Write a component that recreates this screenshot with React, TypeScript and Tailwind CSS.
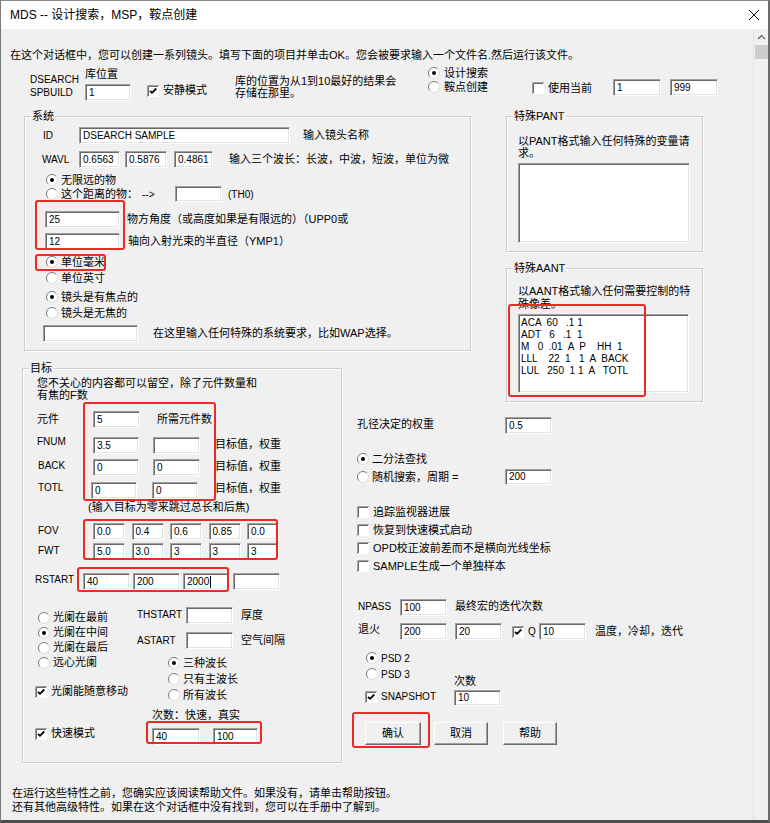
import React from 'react';

const sunken =
  'bg-white border border-t-[#a0a0a0] border-l-[#a0a0a0] border-r-white border-b-white shadow-[inset_1px_1px_0_#696969,inset_-1px_-1px_0_#e3e3e3]';

const Edit: React.FC<{ cls?: string; v?: string; caret?: boolean; short?: boolean }> = ({ cls = '', v = '', caret = false, short = false }) => (
  <div className={`shrink-0 flex items-center pl-[3px] text-[10px] leading-none ${short ? 'h-[16px]' : 'h-[17px]'} ${sunken} ${cls}`}>
    {v}
    {caret && <span className="ml-px w-px h-[12px] bg-black" />}
  </div>
);

const Radio: React.FC<{ on?: boolean }> = ({ on }) => (
  <svg width="12" height="12" viewBox="0 0 12 12" className="shrink-0">
    <circle cx="6" cy="6" r="5.5" fill="#fff" />
    <path d="M2.1 9.9A5.5 5.5 0 0 1 9.9 2.1" fill="none" stroke="#7a7a7a" />
    <path d="M9.9 2.1A5.5 5.5 0 0 1 2.1 9.9" fill="none" stroke="#dcdcdc" />
    {on && <circle cx="6" cy="6" r="2" fill="#000" />}
  </svg>
);

const Check: React.FC<{ on?: boolean }> = ({ on }) => (
  <svg width="12" height="12" viewBox="0 0 12 12" className="shrink-0">
    <rect x="0" y="0" width="12" height="12" fill="#fff" />
    <path d="M0.5 12V0.5H12" fill="none" stroke="#a0a0a0" />
    <path d="M1.5 11V1.5H11" fill="none" stroke="#696969" />
    {on && <path d="M3 5.8 5 7.8 9.3 3.5" fill="none" stroke="#000" strokeWidth="1.8" />}
  </svg>
);

const Opt: React.FC<{ on?: boolean; t: string; cls?: string; gap?: string }> = ({ on, t, cls = '', gap = 'ml-[3px]' }) => (
  <div className={`flex items-center whitespace-nowrap ${cls}`}>
    <Radio on={on} />
    <span className={gap}>{t}</span>
  </div>
);

const Box: React.FC<{ on?: boolean; t: string; cls?: string; lat?: boolean }> = ({ on, t, cls = '', lat }) => (
  <div className={`flex items-center whitespace-nowrap ${cls}`}>
    <Check on={on} />
    <span className={`ml-[4px] ${lat ? 'text-[10px]' : ''}`}>{t}</span>
  </div>
);

const Group: React.FC<{ title: string; cls?: string; children: React.ReactNode }> = ({ title, cls = '', children }) => (
  <fieldset className={`border border-[#cdcdcd] shadow-[inset_1px_1px_0_#fff,1px_1px_0_#fff] ${cls}`}>
    <legend className="ml-[6px] px-[1px] leading-[12px] bg-[#f0f0f0]">{title}</legend>
    {children}
  </fieldset>
);

const Btn: React.FC<{ t: string; cls?: string }> = ({ t, cls = '' }) => (
  <button className={`h-[23px] flex items-center justify-center bg-[#f0f0f0] border border-t-white border-l-white border-r-[#696969] border-b-[#696969] shadow-[inset_-1px_-1px_0_#a0a0a0] text-[11px] ${cls}`}>
    {t}
  </button>
);

const Mark: React.FC<{ cls: string }> = ({ cls }) => (
  <div className={`absolute pointer-events-none border-2 border-[#ec2b24] rounded-[3px] ${cls}`} />
);

const aant = [
  'ACA  60   .1 1',
  'ADT   6   .1  1',
  'M   0  .01  A  P    HH  1',
  'LLL    22  1   1  A  BACK',
  'LUL   250  1 1  A   TOTL',
];

export default function App() {
  return (
    <div className="relative w-[770px] h-[823px] bg-[#f0f0f0] border-t border-l border-r-2 border-b-[3px] border-t-[#8a8a8a] border-l-[#7a7a7a] border-r-[#6b6b6b] border-b-[#4d4d4d] overflow-hidden text-black text-[11px] leading-[13px] font-['Liberation_Sans','Noto_Sans_CJK_SC',sans-serif]">
      {/* title bar */}
      <div className="h-[28px] bg-white flex items-center justify-between pl-[9px] pr-[8px]">
        <span className="text-[12px]">MDS -- 设计搜索，MSP，鞍点创建</span>
        <svg width="12" height="12" viewBox="0 0 12 12">
          <path d="M1 1 11 11M11 1 1 11" stroke="#000" strokeWidth="1" />
        </svg>
      </div>

      <div className="flex h-[791px]">
        <div className="w-[752px] whitespace-nowrap">
          <div className="mt-[20px] ml-[9px] h-[13px]">
            在这个对话框中，您可以创建一系列镜头。填写下面的项目并单击OK。您会被要求输入一个文件名.然后运行该文件。
          </div>

          {/* top row */}
          <div className="flex items-start h-[35px] mt-[4px]">
            <div className="ml-[29px] w-[55px] pt-[7px] text-[10px] leading-[13px]">
              DSEARCH
              <br />
              SPBUILD
            </div>
            <div className="w-[62px] pt-[2px]">
              <div className="leading-[13px]">库位置</div>
              <Edit cls="w-[46px] mt-[3px]" v="1" />
            </div>
            <Box on t="安静模式" cls="w-[88px] mt-[18px] h-[13px]" />
            <div className="w-[193px] mt-[9px] leading-[12px]">
              库的位置为从1到10最好的结果会
              <br />
              存储在那里。
            </div>
            <div className="w-[104px]">
              <Opt on t="设计搜索" cls="h-[14px]" gap="ml-[4px]" />
              <Opt t="鞍点创建" cls="h-[14px]" gap="ml-[4px]" />
            </div>
            <Box t="使用当前" cls="w-[81px] mt-[15px] h-[14px]" />
            <Edit cls="w-[48px] mt-[13px]" v="1" />
            <Edit cls="w-[48px] ml-[9px] mt-[13px]" v="999" />
          </div>

          <div className="grid grid-cols-[320px_164px_220px] grid-rows-[252px_48px_auto] ml-[21px] mt-[9px]">
            {/* system */}
            <Group title="系统" cls="col-start-1 col-span-2 row-start-1 self-start ml-[2px] w-[447px] pb-[8px]">
              <div className="flex items-center h-[17px] mt-[5px]">
                <span className="ml-[18px] w-[36px] text-[10px]">ID</span>
                <Edit cls="w-[211px]" v="DSEARCH SAMPLE" />
                <span className="ml-[13px]">输入镜头名称</span>
              </div>
              <div className="flex items-center h-[17px] mt-[7px]">
                <span className="ml-[17px] w-[37px] text-[10px]">WAVL</span>
                <Edit cls="w-[41px]" v="0.6563" />
                <Edit cls="w-[42px] ml-[5px]" v="0.5876" />
                <Edit cls="w-[39px] ml-[7px]" v="0.4861" />
                <span className="ml-[16px]">输入三个波长：长波，中波，短波，单位为微</span>
              </div>
              <Opt on t="无限远的物" cls="ml-[21px] mt-[6px] h-[12px]" />
              <div className="flex items-center h-[16px]">
                <div className="ml-[21px] w-[129px] flex items-center">
                  <Radio />
                  <span className="ml-[3px]">这个距离的物：</span>
                  <span className="ml-[4px] text-[10px]">--&gt;</span>
                </div>
                <Edit cls="w-[47px]" short />
                <span className="ml-[6px] text-[10px]">(TH0)</span>
              </div>
              <div className="flex items-center h-[17px] mt-[9px]">
                <Edit cls="ml-[20px] w-[75px]" v="25" />
                <span className="ml-[7px]">物方角度（或高度如果是有限远的）（UPP0或</span>
              </div>
              <div className="flex items-center h-[17px] mt-[5px]">
                <Edit cls="ml-[20px] w-[75px]" v="12" />
                <span className="ml-[8px]">轴向入射光束的半直径（YMP1）</span>
              </div>
              <Opt on t="单位毫米" cls="ml-[21px] mt-[6px] h-[12px]" />
              <Opt t="单位英寸" cls="ml-[21px] mt-[4px] h-[12px]" />
              <Opt on t="镜头是有焦点的" cls="ml-[21px] mt-[7px] h-[12px]" />
              <Opt t="镜头是无焦的" cls="ml-[21px] mt-[4px] h-[12px]" />
              <div className="flex items-center h-[17px] mt-[6px]">
                <Edit cls="ml-[18px] w-[95px]" />
                <span className="ml-[15px]">在这里输入任何特殊的系统要求，比如WAP选择。</span>
              </div>
            </Group>

            {/* PANT / AANT */}
            <div className="col-start-3 row-start-1 row-span-2 self-start flex flex-col">
              <Group title="特殊PANT" cls="w-[197px] pb-[8px]">
                <div className="ml-[11px] mt-[13px] leading-[12px]">
                  以PANT格式输入任何特殊的变量请
                  <br />
                  求。
                </div>
                <div className={`ml-[11px] mt-[4px] w-[172px] h-[80px] ${sunken}`} />
              </Group>
              <Group title="特殊AANT" cls="w-[197px] mt-[10px] pb-[8px]">
                <div className="ml-[11px] mt-[11px] leading-[13px]">
                  以AANT格式输入任何需要控制的特
                  <br />
                  殊像差。
                </div>
                <div className={`ml-[11px] mt-[3px] w-[171px] h-[79px] pt-[2px] pl-[2px] text-[10px] leading-[12px] whitespace-pre ${sunken}`}>
                  {aant.map((l) => (
                    <div key={l}>{l}</div>
                  ))}
                </div>
              </Group>
            </div>

            {/* target */}
            <Group title="目标" cls="col-start-1 row-start-2 row-span-2 self-start w-[320px] pb-[17px]">
              <div className="ml-[14px] mt-[3px] leading-[12px]">
                您不关心的内容都可以留空，除了元件数量和
                <br />
                有焦的F数
              </div>
              <div className="flex items-center h-[17px] mt-[10px]">
                <span className="ml-[14px] w-[56px]">元件</span>
                <Edit cls="w-[47px]" v="5" />
                <span className="ml-[17px]">所需元件数</span>
              </div>
              <div className="flex items-center h-[17px] mt-[9px]">
                <span className="ml-[14px] w-[56px] text-[10px] mb-[8px]">FNUM</span>
                <Edit cls="w-[46px]" v="3.5" />
                <Edit cls="w-[47px] ml-[14px]" />
                <span className="ml-[15px] mb-[3px]">目标值，权重</span>
              </div>
              <div className="flex items-center h-[17px] mt-[5px]">
                <span className="ml-[15px] w-[55px] text-[10px] mb-[4px]">BACK</span>
                <Edit cls="w-[46px]" v="0" />
                <Edit cls="w-[47px] ml-[14px]" v="0" />
                <span className="ml-[15px] mb-[3px]">目标值，权重</span>
              </div>
              <div className="flex items-center h-[17px] mt-[6px]">
                <span className="ml-[15px] w-[53px] text-[10px] mb-[6px]">TOTL</span>
                <Edit cls="w-[46px]" v="0" />
                <Edit cls="w-[46px] ml-[15px]" v="0" />
                <span className="ml-[17px] mb-[4px]">目标值，权重</span>
              </div>
              <div className="ml-[65px] mt-[2px] h-[12px] leading-[12px]">(输入目标为零来跳过总长和后焦)</div>
              <div className="flex items-center h-[17px] mt-[10px]">
                <span className="ml-[15px] w-[55px] text-[10px] mb-[2px]">FOV</span>
                <div className="flex gap-[6.5px]">
                  <Edit cls="w-[32px]" v="0.0" />
                  <Edit cls="w-[32px]" v="0.4" />
                  <Edit cls="w-[32px]" v="0.6" />
                  <Edit cls="w-[32px]" v="0.85" />
                  <Edit cls="w-[32px]" v="0.0" />
                </div>
              </div>
              <div className="flex items-center h-[17px] mt-[3px]">
                <span className="ml-[15px] w-[55px] text-[10px] mb-[2px]">FWT</span>
                <div className="flex gap-[6.5px]">
                  <Edit cls="w-[32px]" v="5.0" />
                  <Edit cls="w-[32px]" v="3.0" />
                  <Edit cls="w-[32px]" v="3" />
                  <Edit cls="w-[32px]" v="3" />
                  <Edit cls="w-[32px]" v="3" />
                </div>
              </div>
              <div className="flex items-center h-[17px] mt-[13px]">
                <span className="ml-[12px] w-[48px] text-[10px] mb-[5px]">RSTART</span>
                <div className="flex gap-[3px]">
                  <Edit cls="w-[47px]" v="40" />
                  <Edit cls="w-[47px]" v="200" />
                  <Edit cls="w-[47px]" v="2000" caret />
                  <Edit cls="w-[47px]" />
                </div>
              </div>

              <div className="flex items-start mt-[17px]">
                <div className="ml-[15px] w-[99px] pt-[3px]">
                  <Opt t="光阑在最前" cls="h-[15px]" />
                  <Opt on t="光阑在中间" cls="h-[15px]" />
                  <Opt t="光阑在最后" cls="h-[15px]" />
                  <Opt t="远心光阑" cls="h-[15px]" />
                  <Box on t="光阑能随意移动" cls="-ml-[3px] mt-[15px] h-[13px]" />
                  <Box on t="快速模式" cls="-ml-[3px] mt-[29px] h-[13px]" />
                </div>
                <div>
                  <div className="flex items-center h-[17px]">
                    <span className="w-[49px] text-[10px] mb-[3px]">THSTART</span>
                    <Edit cls="w-[47px]" />
                    <span className="ml-[8px]">厚度</span>
                  </div>
                  <div className="flex items-center h-[17px] mt-[8px]">
                    <span className="w-[49px] text-[10px]">ASTART</span>
                    <Edit cls="w-[47px]" />
                    <span className="ml-[8px]">空气间隔</span>
                  </div>
                  <Opt on t="三种波长" cls="ml-[31px] mt-[6px] h-[16px]" />
                  <Opt t="只有主波长" cls="ml-[31px] h-[16px]" />
                  <Opt t="所有波长" cls="ml-[31px] h-[16px]" />
                  <div className="ml-[15px] mt-[6px] h-[12px] leading-[12px]">次数：快速，真实</div>
                  <div className="flex ml-[15px] mt-[7px]">
                    <Edit cls="w-[48px]" v="40" />
                    <Edit cls="w-[45px] ml-[13px]" v="100" />
                  </div>
                </div>
              </div>
            </Group>

            {/* right panel */}
            <div className="col-start-2 col-span-2 row-start-3 self-start pl-[15px]">
              <div className="flex items-center h-[17px] mt-[7px]">
                <span className="w-[148px] mb-[3px]">孔径决定的权重</span>
                <Edit cls="w-[47px]" v="0.5" />
              </div>
              <Opt on t="二分法查找" cls="mt-[19px] h-[12px]" />
              <div className="flex items-center h-[16px] mt-[4px]">
                <div className="w-[148px] flex items-center">
                  <Radio />
                  <span className="ml-[3px]">随机搜索，周期 =</span>
                </div>
                <Edit cls="w-[47px]" v="200" short />
              </div>
              <div className="mt-[18px]">
                <Box t="追踪监视器进展" cls="h-[18px]" />
                <Box t="恢复到快速模式启动" cls="h-[18px]" />
                <Box t="OPD校正波前差而不是横向光线坐标" cls="h-[18px]" />
                <Box t="SAMPLE生成一个单独样本" cls="h-[18px]" />
              </div>
              <div className="flex items-center h-[17px] mt-[24px]">
                <span className="ml-px w-[42px] text-[10px] mb-[3px]">NPASS</span>
                <Edit cls="w-[47px]" v="100" />
                <span className="ml-[8px] mb-[2px]">最终宏的迭代次数</span>
              </div>
              <div className="flex items-center h-[17px] mt-[7px]">
                <span className="ml-px w-[42px] mb-[4px]">退火</span>
                <Edit cls="w-[47px]" v="200" />
                <Edit cls="w-[47px] ml-[8px]" v="20" />
                <div className="ml-[10px]">
                  <Check on />
                </div>
                <span className="ml-[4px] w-[11px] text-[10px]">Q</span>
                <Edit cls="w-[47px]" v="10" />
                <span className="ml-[9px]">温度，冷却，迭代</span>
              </div>
              <div className="flex items-start mt-[12px]">
                <div className="ml-[9px] w-[88px]">
                  <Opt on t="PSD 2" cls="h-[12px] text-[10px]" />
                  <Opt t="PSD 3" cls="mt-[4px] h-[12px] text-[10px]" />
                  <Box on lat t="SNAPSHOT" cls="-ml-px mt-[10px] h-[13px]" />
                </div>
                <div className="pt-[23px]">
                  <div className="h-[12px] leading-[12px]">次数</div>
                  <Edit cls="w-[47px] mt-[3px]" v="10" short />
                </div>
              </div>
              <div className="flex mt-[16px]">
                <Btn t="确认" cls="ml-[8px] w-[56px]" />
                <Btn t="取消" cls="ml-[13px] w-[54px]" />
                <Btn t="帮助" cls="ml-[15px] w-[54px]" />
              </div>
            </div>
          </div>

          <div className="mt-[23px] ml-[11px] leading-[14px]">
            在运行这些特性之前，您确实应该阅读帮助文件。如果没有，请单击帮助按钮。
            <br />
            还有其他高级特性。如果在这个对话框中没有找到，您可以在手册中了解到。
          </div>
        </div>

        {/* scrollbar */}
        <div className="w-[15px] bg-[#f0f0f0] border-l border-[#e2e2e2] flex flex-col items-center">
          <svg width="9" height="6" viewBox="0 0 9 6" className="mt-[5px]">
            <path d="M1 5 4.5 1.5 8 5" fill="none" stroke="#606060" strokeWidth="1.2" />
          </svg>
          <div className="mt-[5px] w-[13px] h-[14px] bg-[#cdcdcd]" />
        </div>
      </div>

      {/* annotation boxes */}
      <Mark cls="left-[34px] top-[199px] w-[90px] h-[50px]" />
      <Mark cls="left-[34px] top-[253px] w-[71px] h-[17px]" />
      <Mark cls="left-[507px] top-[303px] w-[138px] h-[93px]" />
      <Mark cls="left-[82px] top-[401px] w-[133px] h-[99px]" />
      <Mark cls="left-[82px] top-[518px] w-[195px] h-[41px]" />
      <Mark cls="left-[76px] top-[566px] w-[152px] h-[25px]" />
      <Mark cls="left-[145px] top-[720px] w-[116px] h-[23px]" />
      <Mark cls="left-[351px] top-[711px] w-[78px] h-[36px]" />
    </div>
  );
}
